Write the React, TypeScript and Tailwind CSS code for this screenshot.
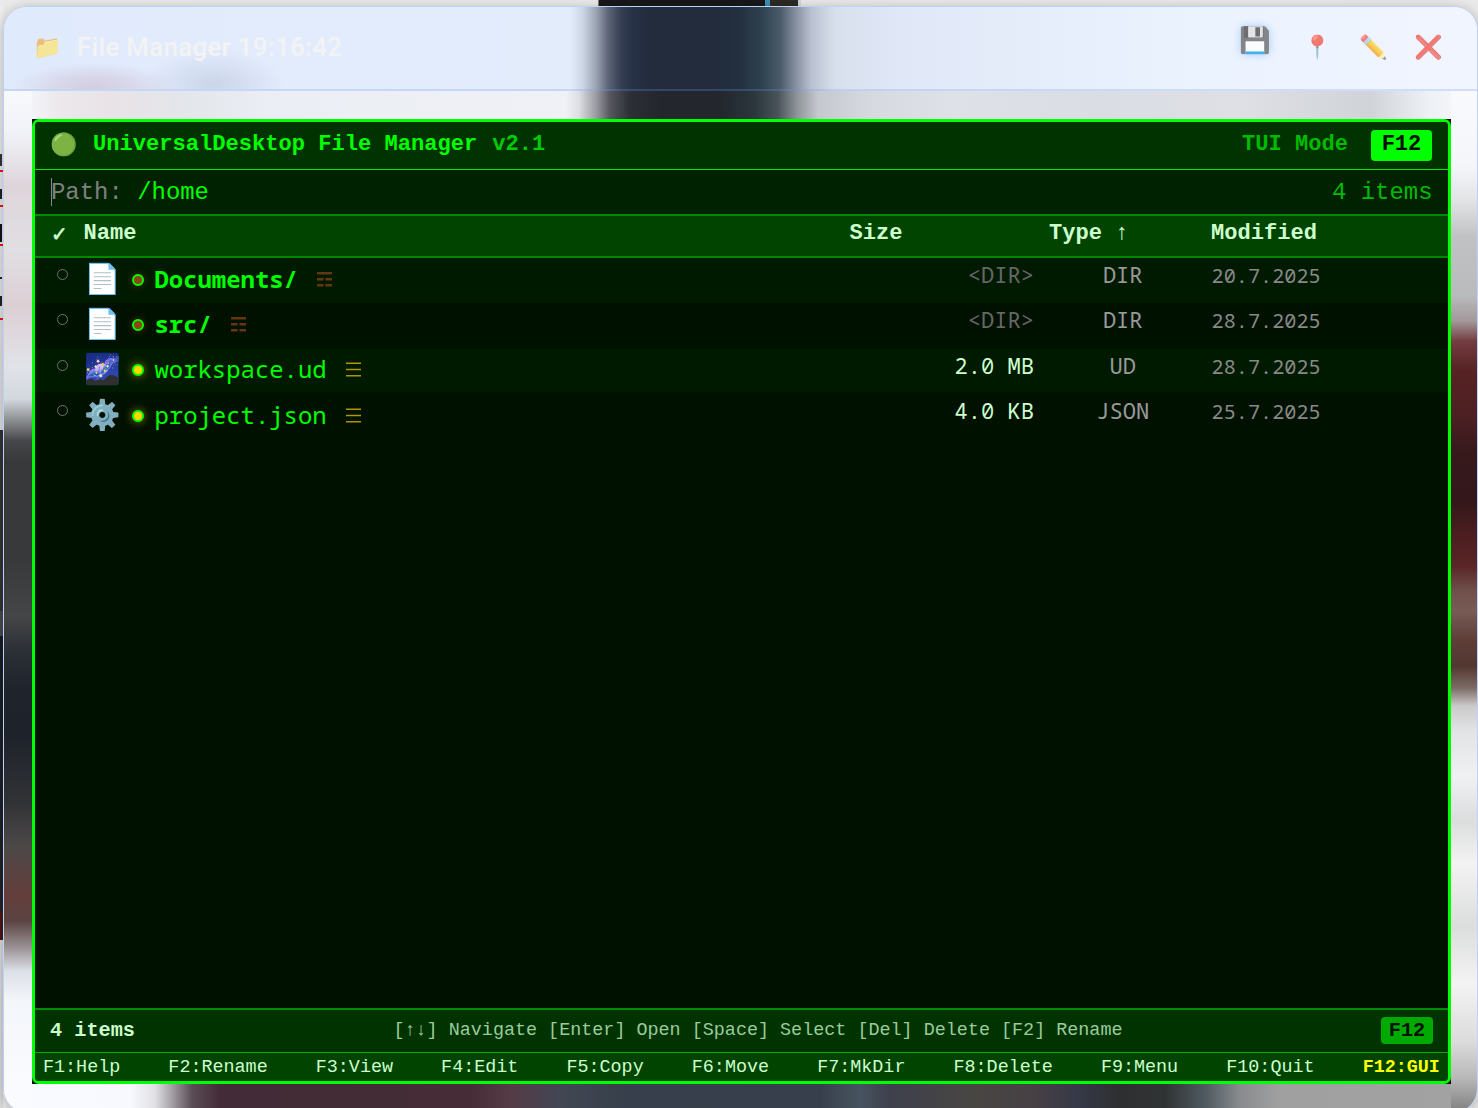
import React from 'react';

const mono = "font-['Liberation_Mono',monospace]";
const list = "font-['Noto_Sans_Mono','DejaVu_Sans_Mono',monospace]";

type Entry = {
  icon: string;
  name: string;
  dir: boolean;
  size: string;
  type: string;
  date: string;
  row: string;
  line: string;
};

const entries: Entry[] = [
  { icon: '📄', name: 'Documents/', dir: true, size: '<DIR>', type: 'DIR', date: '20.7.2025', row: 'h-[45px] bg-[#001a00]', line: 'h-[45px]' },
  { icon: '📄', name: 'src/', dir: true, size: '<DIR>', type: 'DIR', date: '28.7.2025', row: 'h-[46px] bg-[#001100]', line: 'h-[45px]' },
  { icon: '🌌', name: 'workspace.ud', dir: false, size: '2.0 MB', type: 'UD', date: '28.7.2025', row: 'h-[43px] bg-[#001a00]', line: 'h-[43px]' },
  { icon: '⚙️', name: 'project.json', dir: false, size: '4.0 KB', type: 'JSON', date: '25.7.2025', row: 'h-[47px] pt-[2px] bg-[#001100]', line: 'h-[45px]' },
];

const keys = ['F1:Help', 'F2:Rename', 'F3:View', 'F4:Edit', 'F5:Copy', 'F6:Move', 'F7:MkDir', 'F8:Delete', 'F9:Menu', 'F10:Quit'];

const titleBackdrop =
  'linear-gradient(90deg,#dfeafc 0px,#e3ecfd 300px,#e2ecfb 570px,#cbd5e3 583px,#9ba4b3 596px,#5d6577 608px,#333c50 622px,#273146 634px,#232c3d 650px,#232c3d 715px,#22303f 740px,#2f4250 762px,#4a5a68 780px,#8790a0 796px,#b9c1d0 811px,#d8e0ee 835px,#e0e8f7 900px,#e6eefc 1050px,#ebf3fe 1200px,#f1f5ff 1478px)';
const topBackdrop =
  'linear-gradient(90deg,#f6f9fd 0px,#f3f4f8 32px,#ece8ec 60px,#e9e3e7 110px,#e3e6eb 190px,#ebeef4 270px,#eff1f6 566px,#dcdee3 579px,#9b9ca3 596px,#55565e 610px,#2d2f37 630px,#23262d 660px,#23262d 720px,#2b363d 755px,#49545a 778px,#8e9499 797px,#c5c8ce 818px,#d6d9df 870px,#dfe1e8 950px,#dadde4 1100px,#dee0e5 1240px,#d0d3d8 1370px,#eef1f5 1430px,#f9fafd 1478px)';
const bottomBackdrop =
  'linear-gradient(90deg,#fafbff 0px,#f8f9ff 130px,#e0e0e4 155px,#a49fa5 172px,#5b4d55 192px,#432c37 220px,#452c37 470px,#553b46 510px,#424653 560px,#363f4b 630px,#383f4c 820px,#475360 860px,#3e404c 890px,#484643 970px,#474045 1035px,#343847 1080px,#2e2f30 1120px,#303334 1165px,#4e5a60 1205px,#898b8e 1240px,#a0a0a0 1280px,#a2a2a2 1478px)';
const leftBackdrop =
  'linear-gradient(180deg,#f7f9fd 0px,#f1f3f8 40px,#ded5db 95px,#e1dfe3 160px,#dccfd4 215px,#e1e3e9 275px,#d2d8df 308px,#8a8d90 330px,#45474a 350px,#38393b 370px,#38393b 470px,#454648 525px,#2b2f36 560px,#1f242c 600px,#1e222a 645px,#303236 710px,#4d4848 755px,#633e3c 805px,#5b4443 830px,#9c9396 857px,#dce0e8 880px,#f3f6fa 910px,#fafbff 990px,#fafbff 1017px)';
const rightBackdrop =
  'linear-gradient(180deg,#f9fafd 0px,#f5f6fa 75px,#e1e3e5 110px,#c0c2c4 145px,#b8babc 205px,#a3989a 230px,#743d41 250px,#572224 280px,#4d2023 325px,#37191c 360px,#33171a 410px,#4c1e20 445px,#5a2527 475px,#70504b 500px,#785b55 520px,#5c3e37 550px,#523730 575px,#7d6b66 597px,#cbcaca 615px,#e1e3e5 640px,#eff1f3 685px,#dcdddd 730px,#f3f3f3 772px,#dcdddd 835px,#f3f3f3 892px,#dcdcdc 950px,#b8b8b8 987px,#868686 1017px)';

function Trigram({ dir }: { dir: boolean }) {
  return dir ? (
    <svg width="15" height="15" viewBox="0 0 15 15" fill="#65370f">
      <path d="M0 0h15v2.6H0zM0 6h6.6v2.4H0zM8.4 6H15v2.4H8.4zM0 12h6.6v2.4H0zM8.4 12H15v2.4H8.4z" />
    </svg>
  ) : (
    <svg width="15" height="15" viewBox="0 0 15 15" fill="#b09500">
      <path d="M0 .5h15V2H0zM0 6.7h15v1.5H0zM0 12.9h15v1.5H0z" />
    </svg>
  );
}

function Row({ e }: { e: Entry }) {
  return (
    <div className={`flex ${e.row} ${list}`}>
      <div className="w-[48px] shrink-0 pl-[22px] pt-[10.5px]">
        <div className="h-[11px] w-[11px] rounded-full border border-[#6d746d]" />
      </div>
      <div className={`flex w-[736px] shrink-0 items-center text-[23.92px] whitespace-pre text-[#00ff00] ${e.line}`}>
        <span className="w-[39px] pb-[5px] text-center text-[29.4px] leading-[40px]">{e.icon}</span>
        <span
          className={`mb-px ml-[10px] h-[11.5px] w-[11.5px] rounded-full border-2 border-[#00ff00] ${
            e.dir ? 'bg-[#8b4513] shadow-[0_0_7px_#8b451390]' : 'bg-[#ffd700] shadow-[0_0_8px_#ffd70090]'
          }`}
        />
        <span className={`ml-[11px] pb-[4px] leading-[41px] ${e.dir ? 'font-bold' : ''}`}>{e.name}</span>
        <span className="ml-[19.5px] pb-[3px]">
          <Trigram dir={e.dir} />
        </span>
      </div>
      <div className={`w-[215px] shrink-0 text-right text-[22.08px] leading-[32px] ${e.dir ? 'text-[#666666]' : 'text-[#ccffcc]'}`}>{e.size}</div>
      <div className="w-[177.5px] shrink-0 text-center text-[22.08px] leading-[32px] text-[#999999]">{e.type}</div>
      <div className="pt-px text-[20.24px] leading-[32px] text-[#888888]">{e.date}</div>
    </div>
  );
}

function Terminal() {
  return (
    <div className="h-[965px] bg-[#101010]">
      <div className={`flex h-[965px] flex-col overflow-hidden rounded-[7px] border-[3px] border-[#00ff00] bg-[#001100] ${mono}`}>
        <div className="flex h-[48px] shrink-0 items-center border-b border-[#00e600] bg-[#003300] px-[16px] text-[22.08px] font-bold text-[#00ff00]">
          <span className="-ml-px w-[43px] pt-[2px] text-[22px]">🟢</span>
          <span className="pb-[2px]">UniversalDesktop File Manager</span>
          <span className="ml-[15px] pb-[2px] text-[#00cc00]">v2.1</span>
          <span className="ml-auto pb-[2px] text-[#00bb00]">TUI Mode</span>
          <span className="ml-[23px] h-[31px] w-[61px] rounded-[4px] bg-[#00ff00] text-center leading-[30px] text-[#001100]">F12</span>
        </div>
        <div className="flex h-[46px] shrink-0 items-center border-b-2 border-[#008800] bg-[#002200] px-[16px] text-[23.92px]">
          <span className="h-[28px] w-px bg-[#888888]" />
          <span className="-ml-px pt-px text-[#808080]">Path:</span>
          <span className="ml-[14.5px] pt-px text-[#00ff00]">/home</span>
          <span className="-mr-[0.5px] ml-auto pt-px text-[#00bb00]">4 items</span>
        </div>
        <div className="flex h-[42px] shrink-0 border-b-2 border-[#008800] bg-[#004400] pl-[16px] text-[22.08px] leading-[35px] font-bold whitespace-pre text-[#ccffcc]">
          <span className="w-[32.5px] pt-px font-['DejaVu_Sans',sans-serif] text-[20px] [-webkit-text-stroke:0.7px_#ccffcc]">✓</span>
          <span className="w-[766px]">Name</span>
          <span className="w-[199.5px]">Size</span>
          <span className="w-[162px]">
            Type <span className="font-normal">↑</span>
          </span>
          <span>Modified</span>
        </div>
        <div className="grow">
          {entries.map((e) => (
            <Row key={e.name} e={e} />
          ))}
        </div>
        <div className="flex h-[44px] shrink-0 items-center justify-between border-t-2 border-[#008c00] bg-[#003300] px-[15px] text-[#ccffcc]">
          <span className="text-[20.24px] font-bold">4 items</span>
          <span className="text-[18.42px] whitespace-pre text-[#99cc99]">[↑↓] Navigate [Enter] Open [Space] Select [Del] Delete [F2] Rename</span>
          <span className="mb-px h-[27px] w-[52px] rounded-[4px] bg-[#00aa00] text-center text-[20.24px] leading-[27px] font-bold text-[#001100]">F12</span>
        </div>
        <div className="flex h-[29px] shrink-0 justify-between border-t border-[#00aa00] bg-[#004400] px-[8px] text-[18.4px] leading-[29px] text-[#ccffcc]">
          {keys.map((k) => (
            <span key={k}>{k}</span>
          ))}
          <span className="font-bold text-[#ffff00]">F12:GUI</span>
        </div>
      </div>
    </div>
  );
}

export default function App() {
  return (
    <div className="relative h-[1108px] w-[1478px] overflow-hidden bg-[#e9e9e9]">
      <div className="flex h-[6px]">
        <div className="w-[598px] bg-[#eaeaea]" />
        <div className="w-[167px] border-l border-[#777777] bg-[#18181a]" />
        <div className="w-[5px] bg-[#3b91b5]" />
        <div className="w-[28px] bg-[#2d2a24]" />
        <div className="w-[3px] bg-[#d5d5dc]" />
      </div>
      <div className="flex">
        <div className="h-[1102px] w-[3px] shrink-0 overflow-hidden bg-[linear-gradient(180deg,#ededed_0px,#dddddd_400px,#dddddd_424px,#333333_424px,#333333_605px,#484848_605px,#484848_630px,#191b20_630px,#22242a_905px,#4a1818_905px,#4a1818_934px,#d8d8d8_934px)]">
          <div className="mt-[148px] flex flex-col gap-[17px]">
            <div className="h-[18px] border-b-2 border-[#f01010]"><div className="h-[12px] w-[2px] bg-[#333333]" /></div>
            <div className="h-[18px] border-b-2 border-[#f01010]"><div className="h-[10px] w-[2px] bg-[#222222]" /></div>
            <div className="h-[22px] border-b-2 border-[#f01010]"><div className="h-[18px] w-[2px] bg-[#111111]" /></div>
            <div className="mt-[14px] h-[2px] w-[2px] bg-[#222222]" />
            <div className="h-[24px] border-b-2 border-[#f01010]"><div className="h-[10px] w-[2px] bg-[#222222]" /></div>
          </div>
        </div>
        <div className="h-[1107px] w-[1475px] shrink-0 overflow-hidden rounded-[24px] border border-[#bcd2f8] shadow-[0_2px_12px_#00000040]">
          <div className="h-[84px] border-b-2 border-[#6f9ae83f]" style={{ backgroundImage: titleBackdrop, backgroundPosition: '-4px 0', backgroundSize: '1478px 100%' }}>
            <div className="flex h-[82px] items-center bg-[radial-gradient(ellipse_80px_24px_at_90px_80px,#a45d7336,#a45d7320_50%,transparent),radial-gradient(ellipse_70px_36px_at_210px_78px,#586a842c,transparent)] pr-[34px] pl-[30px] font-['Roboto',sans-serif] text-[25.76px] font-medium text-[#f3f3f3]">
              <span className="-ml-px w-[44px] text-[23px] opacity-70">📁</span>
              <span className="pb-[2px] leading-[32px] tracking-[0.37px]">File Manager 19:16:42</span>
              <div className="ml-auto flex items-center text-[23px]">
                <span className="mr-[32px] pb-[15px] text-[25.5px] opacity-75 drop-shadow-[0_0_4px_#90bcf4]">💾</span>
                <span className="mr-[26.5px] pt-px opacity-70">📍</span>
                <span className="mr-[26.5px] pt-px opacity-70">✏️</span>
                <span className="pt-px opacity-70">❌</span>
              </div>
            </div>
          </div>
          <div className="flex">
            <div className="h-[1017px] w-[28px] shrink-0" style={{ backgroundImage: leftBackdrop }} />
            <div className="w-[1419px] shrink-0">
              <div className="h-[28px]" style={{ backgroundImage: topBackdrop, backgroundPosition: '-32px 0', backgroundSize: '1478px 100%' }} />
              <Terminal />
              <div className="h-[25px]" style={{ backgroundImage: bottomBackdrop, backgroundPosition: '-32px 0', backgroundSize: '1478px 100%' }} />
            </div>
            <div className="h-[1017px] w-[27px] shrink-0" style={{ backgroundImage: rightBackdrop }} />
          </div>
        </div>
      </div>
    </div>
  );
}
